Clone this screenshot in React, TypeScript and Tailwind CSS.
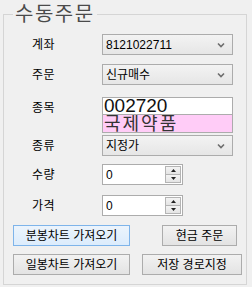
import React from 'react'

const font = {fontFamily: '"Liberation Sans", "Noto Sans CJK KR", sans-serif'}

function Chevron() {
  return (
    <svg width="8" height="6" viewBox="0 0 8 6" className="shrink-0">
      <path d="M1 1.5 L4 4.5 L7 1.5" fill="none" stroke="#6d6d6d" strokeWidth="1.6" />
    </svg>
  )
}

function Combo({value}: {value: string}) {
  return (
    <div className="flex h-[21px] w-[131px] items-center justify-between border border-[#acacac] bg-gradient-to-b from-[#f3f3f3] to-[#e6e6e6] pl-[3px] pr-[7px] text-[12px] text-black">
      <span>{value}</span>
      <Chevron />
    </div>
  )
}

function Spin({value}: {value: string}) {
  return (
    <div className="flex h-[21px] w-[81px] items-center justify-between border border-[#acacac] bg-white pl-[3px] pr-[1px] text-[12px] text-black">
      <span>{value}</span>
      <div className="flex h-[17px] w-[16px] flex-col">
        <div className="flex h-1/2 items-center justify-center border border-[#b4b4b4] bg-gradient-to-b from-[#f4f4f4] to-[#e4e4e4]">
          <svg width="5" height="3" viewBox="0 0 5 3">
            <path d="M0 3 L2.5 0 L5 3 Z" fill="#222" />
          </svg>
        </div>
        <div className="flex h-1/2 items-center justify-center border border-t-0 border-[#b4b4b4] bg-gradient-to-b from-[#f4f4f4] to-[#e4e4e4]">
          <svg width="5" height="3" viewBox="0 0 5 3">
            <path d="M0 0 L2.5 3 L5 0 Z" fill="#222" />
          </svg>
        </div>
      </div>
    </div>
  )
}

function Row({label, className, children}: {label: string; className: string; children: React.ReactNode}) {
  return (
    <div className={`flex ${className}`}>
      <div className="flex h-[21px] w-[98px] items-center pl-[28px] text-[12px] tracking-[0.5px] text-black">{label}</div>
      {children}
    </div>
  )
}

function Btn({label, className, active}: {label: string; className: string; active?: boolean}) {
  return (
    <button
      className={
        active
          ? `flex h-[21px] items-center justify-center border border-[#7eb4ea] bg-gradient-to-b from-[#ecf4fc] to-[#dcecfc] text-[12px] text-black ${className}`
          : `flex h-[21px] items-center justify-center border border-[#acacac] bg-gradient-to-b from-[#f2f2f2] to-[#e3e3e3] text-[12px] text-black ${className}`
      }
    >
      {label}
    </button>
  )
}

export default function App() {
  return (
    <div className="h-[287px] w-[252px] bg-[#f0f0f0] pl-[3px] pt-[14px]" style={font}>
      <div className="relative h-[271px] w-[244px] border border-[#d5d5d5]">
        <div className="absolute left-[9px] top-[-13px] bg-[#f0f0f0] px-[2px] text-[20px] leading-[24px] tracking-[1.5px] text-[#4a4a4a]">
          수동주문
        </div>

        <div className="flex flex-col">
          <Row label="계좌" className="mt-[19px]">
            <Combo value="8121022711" />
          </Row>
          <Row label="주문" className="mt-[9px]">
            <Combo value="신규매수" />
          </Row>
          <Row label="종목" className="mt-[12px]">
            <div className="flex flex-col">
              <div className="flex h-[18px] w-[131px] items-center overflow-hidden border border-[#acacac] bg-white pl-[1px] text-[19px] leading-[16px] text-[#111]">
                002720
              </div>
              <div className="flex h-[18px] w-[131px] items-center overflow-hidden border border-t-0 border-[#acacac] bg-[#ffccf7] pl-[1px] text-[18px] leading-[16px] tracking-[2px] text-[#333]">
                국제약품
              </div>
            </div>
          </Row>
          <Row label="종류" className="mt-[2px]">
            <Combo value="지정가" />
          </Row>
          <Row label="수량" className="mt-[8px]">
            <Spin value="0" />
          </Row>
          <Row label="가격" className="mt-[10px]">
            <Spin value="0" />
          </Row>

          <div className="mt-[9px] flex pl-[9px]">
            <Btn label="분봉차트 가져오기" className="w-[117px]" active />
            <Btn label="현금 주문" className="ml-[32px] w-[75px]" />
          </div>
          <div className="mt-[8px] flex pl-[9px]">
            <Btn label="일봉차트 가져오기" className="w-[117px]" />
            <Btn label="저장 경로지정" className="ml-[12px] w-[100px]" />
          </div>
        </div>
      </div>
    </div>
  )
}
